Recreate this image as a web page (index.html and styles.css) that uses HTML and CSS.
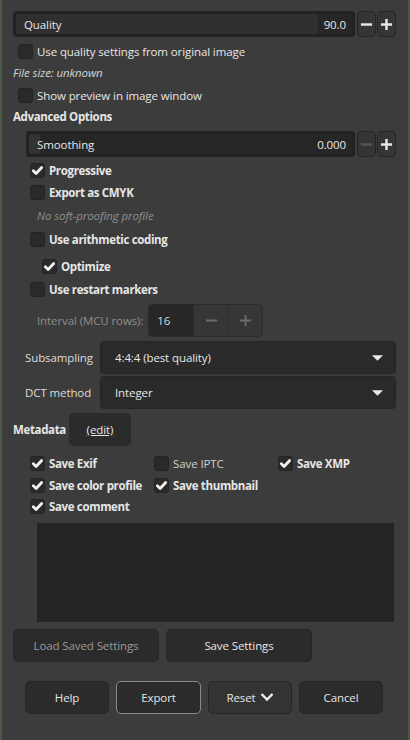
FILE: index.html
```html
<!DOCTYPE html>
<html>
<head>
<meta charset="utf-8">
<link rel="stylesheet" href="styles.css">
</head>
<body>
<div class="dialog">
  <div class="scale-row q-row">
    <div class="scale"><div class="fill" style="width:90%"></div><span class="s-label">Quality</span><span class="s-val">90.0</span></div>
    <button class="pm"><svg viewBox="0 0 14 14"><path d="M1 7h12" /></svg></button>
    <button class="pm"><svg viewBox="0 0 14 14"><path d="M1 7h12M7 1v12" /></svg></button>
  </div>
  <label class="chk r-useq"><span class="box"></span>Use quality settings from original image</label>
  <div class="ital r-fs">File size: unknown</div>
  <label class="chk r-prev"><span class="box"></span>Show preview in image window</label>
  <div class="bold r-adv">Advanced Options</div>
  <div class="adv">
    <div class="scale-row s-row">
      <div class="scale"><div class="fill knob"></div><span class="s-label">Smoothing</span><span class="s-val">0.000</span></div>
      <button class="pm dis"><svg viewBox="0 0 14 14"><path d="M1 7h12" /></svg></button>
      <button class="pm"><svg viewBox="0 0 14 14"><path d="M1 7h12M7 1v12" /></svg></button>
    </div>
    <label class="chk b r-prog"><span class="box on"><svg viewBox="0 0 14 14"><path d="M2.5 7.2l3 3 6-6.5"/></svg></span>Progressive</label>
    <label class="chk b r-cmyk"><span class="box"></span>Export as CMYK</label>
    <div class="ital dim r-nsp">No soft-proofing profile</div>
    <label class="chk b r-arith"><span class="box"></span>Use arithmetic coding</label>
    <label class="chk b r-opt"><span class="box on"><svg viewBox="0 0 14 14"><path d="M2.5 7.2l3 3 6-6.5"/></svg></span>Optimize</label>
    <label class="chk b r-rst"><span class="box"></span>Use restart markers</label>
    <div class="interval">
      <span class="dim">Interval (MCU rows):</span>
      <div class="spin">
        <span class="sp-entry">16</span>
        <span class="sp-btn"><svg viewBox="0 0 14 14"><path d="M1 7h12" /></svg></span>
        <span class="sp-btn"><svg viewBox="0 0 14 14"><path d="M1 7h12M7 1v12" /></svg></span>
      </div>
    </div>
  </div>
  <div class="combo-row r-sub">
    <span class="c-label">Subsampling</span>
    <div class="combo"><span>4:4:4 (best quality)</span><svg class="arr" viewBox="0 0 14 8"><path d="M1 1h12L7 7z"/></svg></div>
  </div>
  <div class="combo-row r-dct">
    <span class="c-label">DCT method</span>
    <div class="combo"><span>Integer</span><svg class="arr" viewBox="0 0 14 8"><path d="M1 1h12L7 7z"/></svg></div>
  </div>
  <div class="meta">
    <span class="bold">Metadata</span>
    <span class="edit"><u>(edit)</u></span>
  </div>
  <div class="mgrid">
    <label class="chk b"><span class="box on"><svg viewBox="0 0 14 14"><path d="M2.5 7.2l3 3 6-6.5"/></svg></span>Save Exif</label>
    <label class="chk"><span class="box"></span>Save IPTC</label>
    <label class="chk b"><span class="box on"><svg viewBox="0 0 14 14"><path d="M2.5 7.2l3 3 6-6.5"/></svg></span>Save XMP</label>
    <label class="chk b"><span class="box on"><svg viewBox="0 0 14 14"><path d="M2.5 7.2l3 3 6-6.5"/></svg></span>Save color profile</label>
    <label class="chk b"><span class="box on"><svg viewBox="0 0 14 14"><path d="M2.5 7.2l3 3 6-6.5"/></svg></span>Save thumbnail</label>
    <span></span>
    <label class="chk b"><span class="box on"><svg viewBox="0 0 14 14"><path d="M2.5 7.2l3 3 6-6.5"/></svg></span>Save comment</label>
  </div>
  <div class="comment"></div>
  <div class="save-row">
    <button class="btn dimt">Load Saved Settings</button>
    <button class="btn">Save Settings</button>
  </div>
  <div class="actions">
    <button class="btn">Help</button>
    <button class="btn def">Export</button>
    <button class="btn reset">Reset <svg viewBox="0 0 14 10"><path d="M1.5 2l5.5 5.5 5.5-5.5"/></svg></button>
    <button class="btn">Cancel</button>
  </div>
</div>
</body>
</html>
```
FILE: styles.css
```css
html, body { margin: 0; padding: 0; background: #3c3c3c; }
body { width: 410px; height: 740px; overflow: hidden; }
.dialog {
  box-sizing: border-box;
  width: 410px; height: 740px;
  background: #3c3c3c;
  border-left: 2px solid #4a5a44;
  border-right: 2px solid #4a5a44;
  padding: 11px 12px 0 11px;
  font-family: "Open Sans", "Noto Sans", sans-serif;
  font-size: 11.5px;
  letter-spacing: -0.1px;
  color: #e6e6e6;
  display: flex; flex-direction: column;
}
button { font: inherit; color: inherit; letter-spacing: inherit; }
.bold, .chk.b { font-weight: bold; letter-spacing: -0.35px; }
.ital { font-style: italic; color: #d6d6d6; }
.dim { color: #8e8e8e; }

.scale-row { display: flex; align-items: stretch; height: 26px; gap: 1px; }
.scale {
  flex: 1; position: relative; box-sizing: border-box;
  background: #262626; border: 3px solid #222; border-radius: 4px;
  display: flex; align-items: center; justify-content: space-between;
  padding: 0 6px 0 8px; margin-right: 1px;
}
.fill { position: absolute; left: 0; top: 0; bottom: 0; background: #2f2f2f; border-radius: 2px; }
.knob { width: 11px; background: #333; }
.s-label, .s-val { position: relative; }
.pm {
  width: 19px; padding: 0; box-sizing: border-box;
  background: #353535; border: 1px solid #262626; border-radius: 4px;
  display: flex; align-items: center; justify-content: center;
}
.pm svg { width: 13px; height: 13px; stroke: #e8e8e8; stroke-width: 2.6; fill: none; }
.pm.dis svg { stroke: #555; }

.chk { display: flex; align-items: center; gap: 4px; height: 22px; }
.box {
  width: 15px; height: 15px; box-sizing: border-box;
  background: #2a2a2a; border: 1px solid #242424; border-radius: 3px;
  display: flex; align-items: center; justify-content: center;
  flex: none;
}
.box svg { width: 13px; height: 13px; stroke: #f2f2f2; stroke-width: 3; fill: none; stroke-linecap: round; stroke-linejoin: round; }

.r-useq { margin: 3px 0 0 5px; }
.r-fs { height: 22px; line-height: 22px; margin-left: 0; }
.r-prev { margin-left: 5px; }
.r-adv { height: 22px; line-height: 22px; margin-left: 0; }

.adv { padding-left: 13px; display: flex; flex-direction: column; }
.s-row { margin-top: 3px; }
.r-prog { margin: 2px 0 0 4px; }
.r-cmyk { margin-left: 4px; }
.r-nsp { height: 25px; line-height: 25px; margin-left: 11px; }
.r-arith { margin-left: 4px; }
.r-opt { margin: 5px 0 0 16px; }
.r-rst { margin: 1px 0 0 4px; }
.interval { display: flex; align-items: center; gap: 5px; margin: 4px 0 0 11px; }
.spin {
  display: flex; height: 33px; width: 115px; box-sizing: border-box;
  border: 1px solid #2b2b2b; border-radius: 4px; background: #363636; overflow: hidden;
}
.sp-entry { width: 44px; background: #272727; display: flex; align-items: center; padding-left: 8px; box-sizing: border-box; color: #ddd; }
.sp-btn { flex: 1; display: flex; align-items: center; justify-content: center; border-left: 1px solid #2d2d2d; }
.sp-btn svg { width: 13px; height: 13px; stroke: #6c6c6c; stroke-width: 2; fill: none; }

.combo-row { display: flex; align-items: center; height: 33px; margin-left: 12px; }
.r-sub { margin-top: 4px; }
.r-dct { margin-top: 2px; }
.c-label { width: 75px; color: #dcdcdc; }
.combo {
  flex: 1; height: 33px; box-sizing: border-box;
  background: #2a2a2a; border: 1px solid #252525; border-radius: 4px;
  display: flex; align-items: center; justify-content: space-between;
  padding: 0 11px 0 14px;
}
.arr { width: 13px; height: 8px; fill: #e8e8e8; }

.meta { display: flex; align-items: center; margin: 4px 0 0 0; height: 33px; }
.edit {
  margin-left: 3px; width: 62px; height: 33px; border-radius: 5px; background: #2b2b2b;
  display: flex; align-items: center; justify-content: center;
}
.mgrid {
  display: grid; grid-template-columns: 124px 124px auto;
  margin: 7px 0 0 17px; row-gap: 0;
}
.mgrid .chk { height: 21.5px; }
.mgrid .chk:not(.b) { color: #cfcfcf; }
.comment { margin: 5px 2px 0 24px; height: 99px; background: #242424; }

.btn {
  height: 33px; box-sizing: border-box; padding: 0;
  background: #2b2b2b; border: 1px solid #262626; border-radius: 5px;
  display: flex; align-items: center; justify-content: center; gap: 4px;
}
.save-row { display: flex; gap: 7px; margin-top: 7px; }
.save-row .btn { width: 146px; }
.dimt { color: #9a9a9a; }
.actions { display: flex; gap: 7px; margin: 19px 0 0 12px; }
.actions .btn { width: 84px; }
.actions .def { border: 1px solid #8a8a8a; width: 85px; }
.reset { background: #333 !important; }
.reset svg { width: 14px; height: 10px; stroke: #eee; stroke-width: 2.4; fill: none; }
```
